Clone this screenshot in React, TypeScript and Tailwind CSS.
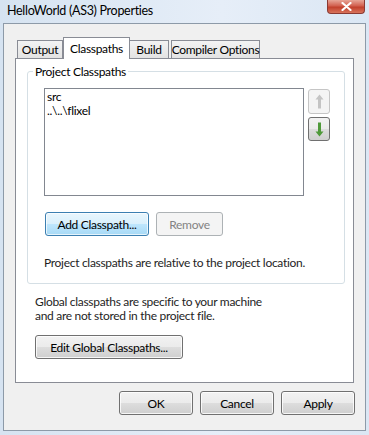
import React from "react";

const font = { fontFamily: 'Lato, "Noto Sans", Arial, sans-serif' };

function WinButton({
  label,
  width,
  variant = "normal",
}: {
  label: string;
  width: string;
  variant?: "normal" | "default" | "disabled";
}) {
  const base =
    "flex h-[24px] items-center justify-center whitespace-nowrap rounded-[3px] border text-[12px] leading-[15px]";
  const look =
    variant === "default"
      ? "border-[#3c7fb1] bg-[linear-gradient(#eaf6fd_0%,#d9f0fc_50%,#bee6fd_51%,#a7d9f5_100%)] text-black shadow-[inset_0_0_0_1px_rgba(255,255,255,0.7)]"
      : variant === "disabled"
        ? "border-[#adb2b5] bg-[#f4f4f4] text-[#838383]"
        : "border-[#707070] bg-[linear-gradient(#f2f2f2_0%,#ebebeb_50%,#dddddd_51%,#cfcfcf_100%)] text-black shadow-[inset_0_0_0_1px_rgba(255,255,255,0.8)]";
  return <div className={`${base} ${look} ${width}`}>{label}</div>;
}

function ArrowIcon({ down, color }: { down?: boolean; color: string }) {
  return (
    <svg width="9" height="15" viewBox="0 0 9 15" className={down ? "rotate-180" : ""}>
      <path d="M4.5 0.5 L8.5 5.5 L6 5.5 L6 14.5 L3 14.5 L3 5.5 L0.5 5.5 Z" fill={color} />
    </svg>
  );
}

export default function App() {
  return (
    <div
      className="flex h-[435px] w-[369px] flex-col overflow-hidden bg-[linear-gradient(90deg,#d6e3f1,#e6eef8_60%,#dbe7f4)] tracking-[-0.3px] text-black"
      style={font}
    >
      {/* title bar */}
      <div className="flex h-[23px] shrink-0 items-start">
        <div className="pl-[7px] pt-[3px] text-[12.5px] leading-[15px] text-black">HelloWorld (AS3) Properties</div>
        <div className="ml-auto mr-[4px] flex h-[14px] w-[38px] items-center justify-center rounded-b-[4px] border border-t-0 border-[#8a3a33] bg-[linear-gradient(#e7a597,#d2604f_45%,#c2402c_55%,#d8745c)]">
          <svg width="11" height="9" viewBox="0 0 11 9">
            <path d="M1.5 1 L9.5 8 M9.5 1 L1.5 8" stroke="#ffffff" strokeWidth="2.2" strokeLinecap="round" />
          </svg>
        </div>
      </div>

      {/* client area */}
      <div className="mx-[3px] flex h-[408px] shrink-0 flex-col border border-[#8d9aa8] bg-[#f0f0f0]">
        {/* tabs */}
        <div className="ml-[13px] mt-[13px] flex h-[21px] items-end whitespace-nowrap text-[12px] leading-[15px]">
          <div className="flex h-[18px] w-[46px] items-center justify-center border-l border-r border-t border-[#898c95] bg-[linear-gradient(#f3f3f3,#e3e3e3)]">
            Output
          </div>
          <div className="relative z-10 -mb-px flex h-[22px] w-[67px] items-start justify-center border-l border-r border-t border-[#898c95] bg-white pt-[3px]">
            Classpaths
          </div>
          <div className="flex h-[18px] w-[39px] items-center justify-center border-r border-t border-[#898c95] bg-[linear-gradient(#f3f3f3,#e3e3e3)]">
            Build
          </div>
          <div className="ml-[2px] flex h-[18px] w-[89px] items-center justify-center border-l border-r border-t border-[#898c95] bg-[linear-gradient(#f3f3f3,#e3e3e3)]">
            Compiler Options
          </div>
        </div>

        {/* tab panel */}
        <div className="mx-[11px] flex h-[325px] flex-col border border-[#898c95] bg-white text-[12px] leading-[15px]">
          <fieldset className="ml-[11px] mr-[8px] mt-[5px] rounded-[3px] border border-[#d5dfe5] pb-[13px]">
            <legend className="ml-[5px] px-[2px] text-[12px] leading-[15px]">Project Classpaths</legend>
            <div className="ml-[16px] mt-[9px] flex items-start">
              <div className="h-[108px] w-[260px] border border-[#828790] bg-white pl-[2px] pt-[1px] text-[12px] leading-[14px]">
                <div>src</div>
                <div>..\..\flixel</div>
              </div>
              <div className="ml-[4px] mt-px flex flex-col gap-[3px]">
                <div className="flex h-[25px] w-[22px] items-center justify-center rounded-[3px] border border-[#c5c5c5] bg-[#f4f4f4]">
                  <ArrowIcon color="#c4c4c4" />
                </div>
                <div className="flex h-[24px] w-[22px] items-center justify-center rounded-[3px] border border-[#707070] bg-[linear-gradient(#f2f2f2_0%,#ebebeb_50%,#dddddd_51%,#cfcfcf_100%)]">
                  <ArrowIcon down color="#4f9a3a" />
                </div>
              </div>
            </div>
            <div className="ml-[17px] mt-[16px] flex gap-[7px]">
              <WinButton label="Add Classpath..." width="w-[104px]" variant="default" />
              <WinButton label="Remove" width="w-[67px]" variant="disabled" />
            </div>
            <div className="ml-[16px] mt-[19px] text-[#1e1e1e]">
              Project classpaths are relative to the project location.
            </div>
          </fieldset>

          <div className="ml-[19px] mt-[11px] leading-[14px] text-[#1e1e1e]">
            <div>Global classpaths are specific to your machine</div>
            <div>and are not stored in the project file.</div>
          </div>
          <div className="ml-[19px] mt-[12px]">
            <WinButton label="Edit Global Classpaths..." width="w-[148px]" />
          </div>
        </div>

        {/* dialog buttons */}
        <div className="mr-[10px] mt-[8px] flex justify-end gap-[7px]">
          <WinButton label="OK" width="w-[74px]" />
          <WinButton label="Cancel" width="w-[74px]" />
          <WinButton label="Apply" width="w-[74px]" />
        </div>
      </div>
    </div>
  );
}
